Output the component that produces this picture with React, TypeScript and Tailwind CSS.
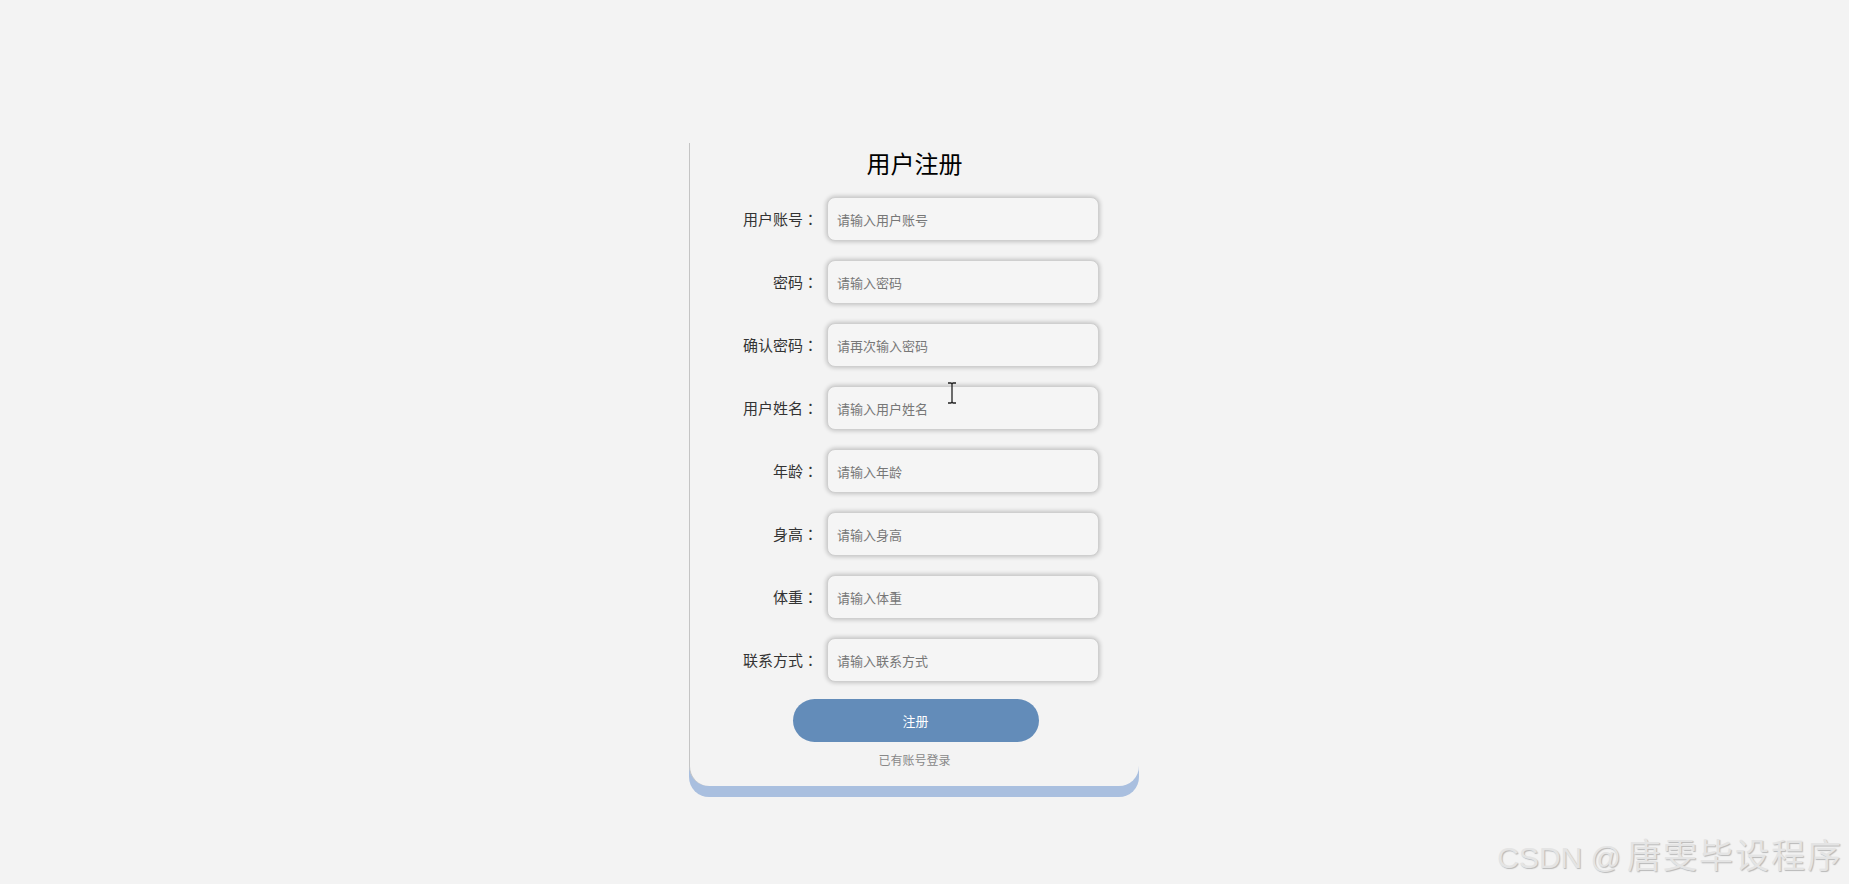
export default function App() {
  const fields = [
    { label: '用户账号', ph: '请输入用户账号' },
    { label: '密码', ph: '请输入密码' },
    { label: '确认密码', ph: '请再次输入密码' },
    { label: '用户姓名', ph: '请输入用户姓名' },
    { label: '年龄', ph: '请输入年龄' },
    { label: '身高', ph: '请输入身高' },
    { label: '体重', ph: '请输入体重' },
    { label: '联系方式', ph: '请输入联系方式' },
  ];

  return (
    <div className="relative w-full h-[884px] bg-[#f3f3f3] overflow-hidden font-['Noto_Sans_CJK_SC','Noto_Sans',sans-serif]">
      <div className="pl-[689px] pt-[143px]">
        {/* register card */}
        <div className="w-[450px] h-[643px] bg-[#f3f3f3] border-l border-[#c4c4c4] rounded-b-[20px] shadow-[0_11px_0_0_#a9bfdf] pt-[4px] flex flex-col">
          <h1 className="text-center text-[24px] leading-[32px] text-black font-normal">用户注册</h1>

          <div className="mt-[18px] grid grid-cols-[128px_272px] gap-x-[9px] gap-y-[19px]">
            {fields.map((f) => (
              <div key={f.label} className="contents">
                <label className="text-right text-[15px] leading-[44px] text-[#333]">
                  {f.label}
                  <span className="font-['Noto_Sans_CJK_JP',sans-serif]">：</span>
                </label>
                <input
                  placeholder={f.ph}
                  className="h-[44px] rounded-[8px] border border-[#cfcfcf] bg-[#f5f5f5] px-[9px] text-[13px] text-[#333] placeholder:text-[#777] shadow-[0_0_4px_1px_rgba(0,0,0,0.2)] outline-none"
                />
              </div>
            ))}
          </div>

          <div className="mt-[17px] flex justify-center">
            <button className="ml-[2px] w-[246px] h-[43px] rounded-full bg-[#638cb9] text-white text-[13px]">注册</button>
          </div>
          <p className="mt-[10px] text-center text-[12px] leading-[16px] text-[#888]">已有账号登录</p>
        </div>
      </div>

      {/* mouse cursor */}
      <svg className="absolute left-[947px] top-[382px]" width="10" height="22" viewBox="0 0 10 22">
        <path d="M1 1h3l1 1 1-1h3M5 2v18M1 21h3l1-1 1 1h3" fill="none" stroke="#222" strokeWidth="1.3" />
      </svg>

      {/* watermark */}
      <div className="absolute right-[6px] top-[828px] flex items-baseline text-[#e4e4e4] [text-shadow:1px_1px_1px_#b8b8b8]">
        <span className="font-['Liberation_Sans',sans-serif] text-[30px] mr-[6px]">CSDN @</span>
        <span className="text-[34px] tracking-[2px]">唐雯毕设程序</span>
      </div>
    </div>
  );
}
